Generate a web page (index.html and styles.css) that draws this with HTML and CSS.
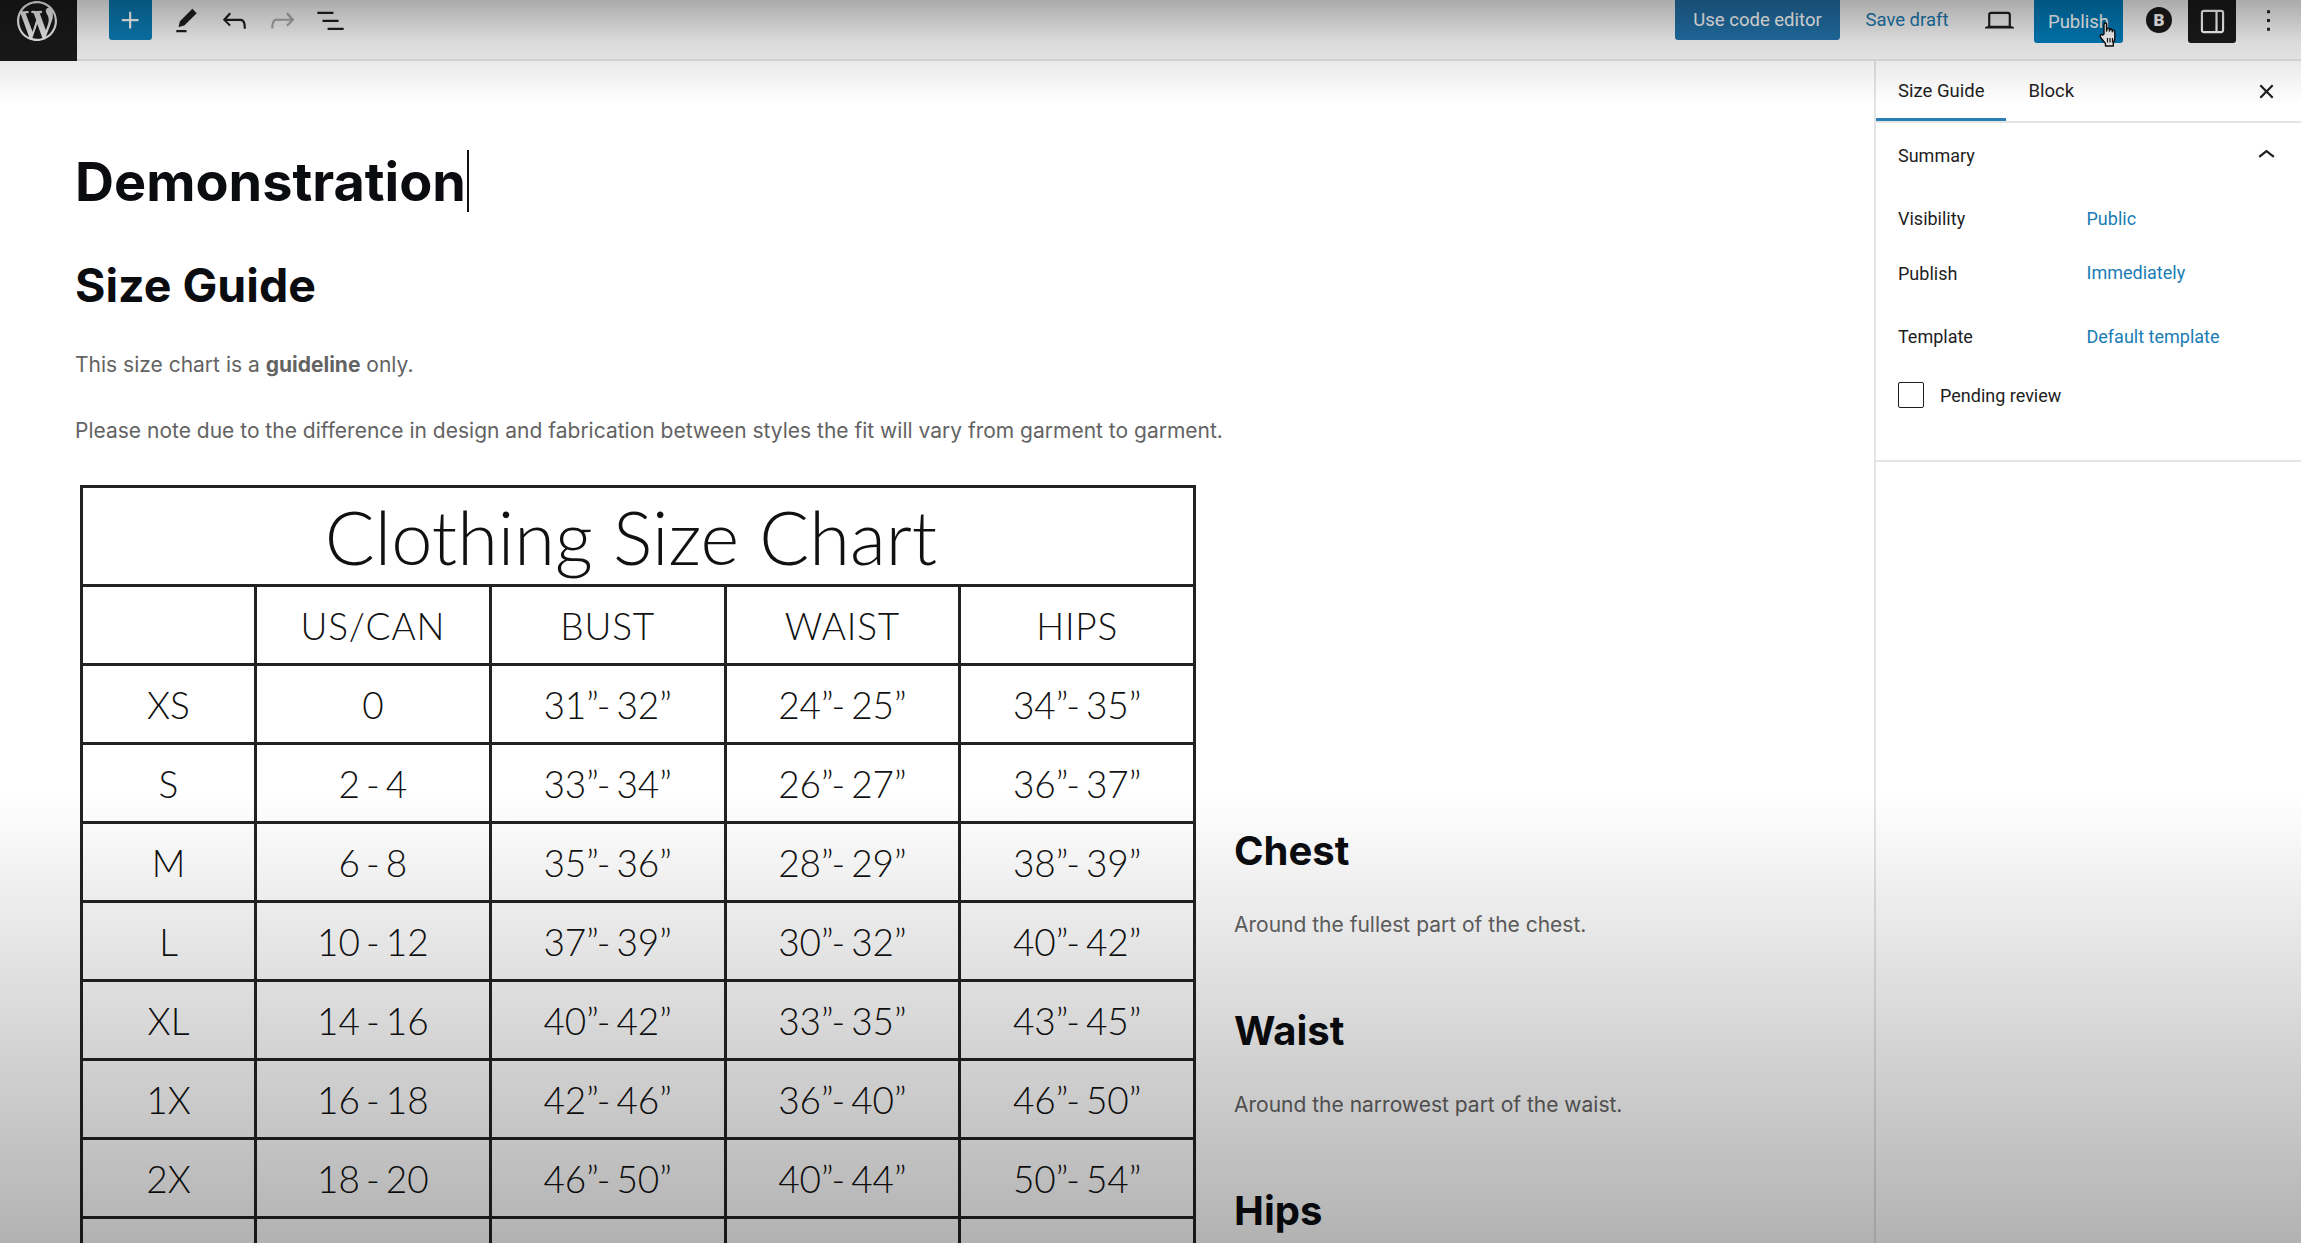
FILE: index.html
```html
<!DOCTYPE html>
<html>
    <head>
        <title>Demonstration</title>
        <link rel="stylesheet" href="styles.css">
    </head>
    <body>
        <div class='app'>
            <header class='topbar'>
                <a class='logo'>
                    <svg viewBox='0 0 20 20' width='40' height='40'><path d="M20 10c0-5.51-4.49-10-10-10C4.48 0 0 4.49 0 10c0 5.52 4.48 10 10 10 5.51 0 10-4.48 10-10zM7.78 15.37L4.37 6.22c.55-.02 1.17-.08 1.17-.08.5-.06.44-1.13-.06-1.11 0 0-1.45.11-2.37.11-.18 0-.37 0-.58-.01C4.12 2.69 6.87 1.11 10 1.11c2.33 0 4.45.87 6.05 2.34-.68-.11-1.65.39-1.65 1.58 0 .74.45 1.36.9 2.1.35.61.55 1.36.55 2.46 0 1.49-1.4 5-1.4 5l-3.03-8.37c.54-.02.82-.17.82-.17.5-.05.44-1.25-.06-1.22 0 0-1.44.12-2.38.12-.87 0-2.33-.12-2.33-.12-.5-.03-.56 1.2-.06 1.22l.92.08 1.26 3.41zM17.41 10c.24-.64.74-1.87.43-4.25.7 1.29 1.05 2.71 1.05 4.25 0 3.29-1.73 6.24-4.4 7.78.97-2.59 1.94-5.2 2.92-7.78zM6.1 18.09C3.12 16.65 1.11 13.53 1.11 10c0-1.3.23-2.48.72-3.59C3.25 10.3 4.67 14.2 6.1 18.09zm4.03-6.63l2.58 6.98c-.86.29-1.76.45-2.71.45-.79 0-1.57-.11-2.29-.33.81-2.38 1.62-4.74 2.42-7.1z"/></svg>
                </a>
                <div class='tools'>
                    <button class='tool add'><svg viewBox='0 0 24 24'><path d="M11 12.5V17.5H12.5V12.5H17.5V11H12.5V6H11V11H6V12.5H11Z"/></svg></button>
                    <button class='tool'><svg viewBox='0 0 24 24'><path d="m19 7-3-3-8.5 8.5-1 4 4-1L19 7Zm-7 11.5H5V20h7v-1.5Z"/></svg></button>
                    <button class='tool'><svg viewBox='0 0 24 24'><path d="M18.3 11.7c-.6-.6-1.4-.9-2.3-.9H6.7l2.9-3.3-1.1-1-4.5 5L8.5 16l1-1-2.7-2.7H16c.5 0 .9.2 1.3.5 1 1 1 3.4 1 4.5v.3h1.5v-.2c0-1.5 0-4.3-1.5-5.7z"/></svg></button>
                    <button class='tool disabled'><svg viewBox='0 0 24 24'><path d="M15.6 6.5l-1.1 1 2.9 3.3H8c-.9 0-1.7.3-2.3.9-1.4 1.5-1.4 4.2-1.4 5.6v.2h1.5v-.3c0-1.1 0-3.5 1-4.5.3-.3.7-.5 1.3-.5h9.2L14.5 15l1.1 1.1 4.6-4.6-4.6-5z"/></svg></button>
                    <button class='tool'><svg viewBox='0 0 24 24'><path d="M3 6h11v1.5H3V6Zm3.5 5.5h11V13h-11v-1.5ZM21 17H10v1.5h11V17Z"/></svg></button>
                </div>
                <div class='actions'>
                    <button class='btn code'>Use code editor</button>
                    <button class='btn draft'>Save draft</button>
                    <button class='tool preview'><svg viewBox='0 0 24 24'><path d="M20.5 16h-.7V8c0-1.1-.9-2-2-2H6.2c-1.1 0-2 .9-2 2v8h-.7c-.8 0-1.5.7-1.5 1.5h20c0-.8-.7-1.5-1.5-1.5zM5.7 8c0-.3.2-.5.5-.5h11.6c.3 0 .5.2.5.5v7.6H5.7V8z"/></svg></button>
                    <button class='btn publish'>Publish
                        <svg class='cursor' viewBox='0 0 20 26' width='20' height='26'><path d="M6 13V3.2c0-1.6 2.6-1.6 2.6 0V10l.4-2c.3-1.3 2.3-1.1 2.4.2l.1 1.8.4-1.3c.4-1.2 2.2-.9 2.3.4l.1 1.6.4-.8c.5-1 2.1-.6 2.1.7V17c0 2-.6 3.400-1.500 4.700V25H7.500v-2.500C6 21 4.500 19 2.400 16c-1-1.500.700-3.200 2.200-1.900z" fill="#fff" stroke="#111" stroke-width="1.400" stroke-linejoin="round"/><path d="M9.500 17v4.500M12 17v4.500M14.500 17v4.500" stroke="#111" stroke-width="1.200"/></svg>
                    </button>
                    <span class='badge'>B</span>
                    <button class='tool settings'><svg viewBox='0 0 24 24'><path d="M18 4H6c-1.100 0-2 .9-2 2v12c0 1.100.9 2 2 2h12c1.100 0 2-.9 2-2V6c0-1.100-.9-2-2-2zm-4 14.500H6c-.3 0-.5-.2-.5-.5V6c0-.3.2-.5.5-.5h8v13zm4.500-.5c0 .3-.2.5-.5.5h-2.500v-13H18c.3 0 .5.2.5.5v12z"/></svg></button>
                    <button class='tool more'><svg viewBox='0 0 24 24'><path d="M13 19h-2v-2h2v2zm0-6h-2v-2h2v2zm0-6h-2V5h2v2z"/></svg></button>
                </div>
            </header>

            <div class='main'>
                <main class='editor'>
                    <h1 class='title'>Demonstration<span class='caret'></span></h1>
                    <h2 class='heading'>Size Guide</h2>
                    <p class='text first'>This size chart is a <strong>guideline</strong> only.</p>
                    <p class='text'>Please note due to the difference in design and fabrication between styles the fit will vary from garment to garment.</p>

                    <div class='columns'>
                        <table class='chart'>
                            <colgroup>
                                <col class='col-size'>
                                <col><col><col><col>
                            </colgroup>
                            <tr class='chart-title'><td colspan='5'>Clothing Size Chart</td></tr>
                            <tr class='chart-head'><td></td><td>US/CAN</td><td>BUST</td><td>WAIST</td><td>HIPS</td></tr>
                            <tr><td>XS</td><td>0</td><td>31”- 32”</td><td>24”- 25”</td><td>34”- 35”</td></tr>
                            <tr><td>S</td><td>2 - 4</td><td>33”- 34”</td><td>26”- 27”</td><td>36”- 37”</td></tr>
                            <tr><td>M</td><td>6 - 8</td><td>35”- 36”</td><td>28”- 29”</td><td>38”- 39”</td></tr>
                            <tr><td>L</td><td>10 - 12</td><td>37”- 39”</td><td>30”- 32”</td><td>40”- 42”</td></tr>
                            <tr><td>XL</td><td>14 - 16</td><td>40”- 42”</td><td>33”- 35”</td><td>43”- 45”</td></tr>
                            <tr><td>1X</td><td>16 - 18</td><td>42”- 46”</td><td>36”- 40”</td><td>46”- 50”</td></tr>
                            <tr><td>2X</td><td>18 - 20</td><td>46”- 50”</td><td>40”- 44”</td><td>50”- 54”</td></tr>
                            <tr><td>3X</td><td>22 - 24</td><td>50”- 54”</td><td>44”- 48”</td><td>54”- 58”</td></tr>
                        </table>
                        <div class='measures'>
                            <h3 class='measure'>Chest</h3>
                            <p class='measure-text'>Around the fullest part of the chest.</p>
                            <h3 class='measure'>Waist</h3>
                            <p class='measure-text'>Around the narrowest part of the waist.</p>
                            <h3 class='measure'>Hips</h3>
                        </div>
                    </div>
                </main>

                <aside class='sidebar'>
                    <div class='tabs'>
                        <span class='tab active'>Size Guide</span>
                        <span class='tab'>Block</span>
                        <button class='close'><svg viewBox='0 0 24 24'><path d="M12 13.06l3.712 3.713 1.061-1.06L13.061 12l3.712-3.712-1.06-1.06L12 10.938 8.288 7.227l-1.061 1.06L10.939 12l-3.712 3.712 1.06 1.061L12 13.061z"/></svg></button>
                    </div>
                    <section class='panel'>
                        <div class='panel-head'>
                            <span>Summary</span>
                            <svg viewBox='0 0 24 24'><path d="M6.500 12.400L12 8l5.500 4.400-.9 1.200L12 10l-4.500 3.600-1-1.200z"/></svg>
                        </div>
                        <div class='row visibility'><span class='label'>Visibility</span><a class='value'>Public</a></div>
                        <div class='row schedule'><span class='label'>Publish</span><a class='value'>Immediately</a></div>
                        <div class='row template'><span class='label'>Template</span><a class='value'>Default template</a></div>
                        <label class='check'><span class='box'></span>Pending review</label>
                    </section>
                </aside>
            </div>
            <div class='shade'></div>
        </div>
    </body>
</html>
```

FILE: styles.css
```css
html, body {
    margin: 0;
    height: 100%;
    overflow: hidden;
    background: #fff;
}

body {
    font-family: 'Roboto', 'Liberation Sans', sans-serif;
    color: #1e1e1e;
}

button {
    border: none;
    background: none;
    padding: 0;
    font: inherit;
}

.app {
    position: relative;
    display: flex;
    flex-direction: column;
    height: 100vh;
    overflow: hidden;
}

/* video player shading, lies over the whole page */
.shade {
    position: absolute;
    inset: 0;
    pointer-events: none;
    background:
        linear-gradient(to bottom, rgba(0,0,0,0.31) 0, rgba(0,0,0,0.12) 40px, rgba(0,0,0,0) 105px),
        linear-gradient(to top, rgba(0,0,0,0.3) 0, rgba(0,0,0,0) 450px);
}

/* top bar */

.topbar {
    display: flex;
    align-items: flex-start;
    flex: none;
    height: 59px;
    border-bottom: 2px solid #e4e4e4;
    background: #f7f7f7;
    font-size: 18px;
}

.logo {
    display: flex;
    justify-content: center;
    flex: none;
    width: 77px;
    height: 61px;
    padding: 1px 3px 0 0;
    box-sizing: border-box;
    background: #1a1a1a;
}

.logo svg {
    fill: #f0f0f0;
}

.tools {
    display: flex;
    margin-left: 32px;
}

.tool {
    display: flex;
    align-items: center;
    justify-content: center;
    width: 48px;
    height: 40px;
}

.tool svg {
    width: 35px;
    height: 35px;
    fill: #1e1e1e;
}

.tool.add {
    width: 43px;
    margin-right: 10px;
    background: #0a7cb4;
    border-radius: 0 0 3px 3px;
}

.tool.add svg {
    fill: #fff;
}

.tool.disabled svg {
    fill: #aaa;
}

.actions {
    display: flex;
    margin-left: auto;
}

.btn {
    height: 40px;
    border-radius: 0 0 3px 3px;
    font-size: 18.5px;
}

.btn.code {
    width: 165px;
    color: #fff;
    background: #2271a8;
}

.btn.draft {
    width: 134px;
    color: #1a79ae;
}

.tool.preview {
    width: 50px;
    margin-right: 10px;
}

.btn.publish {
    position: relative;
    width: 89px;
    height: 43px;
    color: #fff;
    background: #007cba;
}

.cursor {
    position: absolute;
    left: 64px;
    top: 21px;
}

.badge {
    display: flex;
    align-items: center;
    justify-content: center;
    width: 26px;
    height: 26px;
    margin: 7px 16px 0 23px;
    border-radius: 50%;
    background: #1a1a1a;
    color: #fff;
    font-size: 17px;
    font-weight: 900;
}

.tool.settings {
    width: 48px;
    height: 43px;
    background: #1a1a1a;
    border-radius: 0 0 3px 3px;
}

.tool.settings svg {
    fill: #fff;
}

.tool.more {
    width: 65px;
}

/* editor */

.main {
    display: flex;
    flex: 1;
    min-height: 0;
}

.editor {
    flex: 1;
    min-width: 0;
    padding: 0 0 0 75px;
    overflow: hidden;
    font-family: 'Inter', 'Roboto', sans-serif;
}

.title {
    display: flex;
    align-items: center;
    height: 62px;
    margin: 89px 0 0 0;
    font-size: 54px;
    font-weight: 700;
    color: #0b0c10;
}

.caret {
    width: 2px;
    height: 62px;
    margin-left: 1px;
    background: #111;
}

.heading {
    margin: 45px 0 0 0;
    font-size: 46.5px;
    line-height: 56px;
    font-weight: 700;
    color: #0b0c10;
}

.text {
    margin: 0;
    font-size: 21px;
    line-height: 34px;
    color: #636363;
}

.text.first {
    margin-top: 35px;
    margin-bottom: 32px;
}

.columns {
    display: flex;
    margin-top: 37px;
    margin-left: 5px;
}

/* the chart */

.chart {
    flex: none;
    width: 1116px;
    border-collapse: collapse;
    table-layout: fixed;
    font-family: 'Lato', sans-serif;
    font-weight: 300;
    font-size: 37px;
    word-spacing: -4px;
    color: #111;
    text-align: center;
    background: #fff;
}

.col-size {
    width: 174px;
}

.chart td {
    height: 76px;
    padding: 0;
    border: 3px solid #222;
}

.chart-head td {
    letter-spacing: 0.8px;
}

.chart-title td {
    height: 96px;
    padding-right: 14px;
    font-size: 74px;
    word-spacing: 0;
}

.measures {
    padding: 342px 0 0 38px;
}

.measure {
    margin: 0;
    font-size: 40px;
    line-height: 48px;
    font-weight: 700;
    color: #0b0c10;
}

.measure-text {
    margin: 33px 0 65px 0;
    font-size: 21px;
    line-height: 34px;
    color: #636363;
}

/* sidebar */

.sidebar {
    flex: none;
    width: 425px;
    border-left: 2px solid #e4e4e4;
    background: #fff;
    font-size: 18px;
}

.tabs {
    display: flex;
    align-items: center;
    height: 60px;
    border-bottom: 2px solid #e4e4e4;
    font-size: 18.5px;
}

.tab {
    display: flex;
    align-items: center;
    height: 60px;
    padding: 0 22px;
    box-sizing: border-box;
}

.tab.active {
    box-shadow: inset 0 -3px 0 #2a7fb5;
}

.close {
    width: 35px;
    height: 35px;
    margin-left: auto;
    margin-right: 17px;
}

.close svg, .panel-head svg {
    width: 35px;
    height: 35px;
    fill: #1e1e1e;
}

.panel {
    height: 337px;
    padding: 0 22px;
    border-bottom: 2px solid #e4e4e4;
}

.panel-head {
    display: flex;
    align-items: center;
    justify-content: space-between;
    height: 64px;
    margin-right: -5px;
}

.row {
    display: flex;
    align-items: center;
}

.row.visibility {
    margin-top: 21px;
}

.row.schedule {
    margin-top: 34px;
}

.row.template {
    margin-top: 42px;
}

.schedule .value {
    margin-top: -3px;
}

.label {
    width: 188.500px;
}

.value {
    color: #1a7cb4;
}

.check {
    display: flex;
    align-items: center;
    gap: 16px;
    margin-top: 35px;
}

.box {
    width: 24px;
    height: 24px;
    border: 1.5px solid #1e1e1e;
    border-radius: 2px;
}
```
